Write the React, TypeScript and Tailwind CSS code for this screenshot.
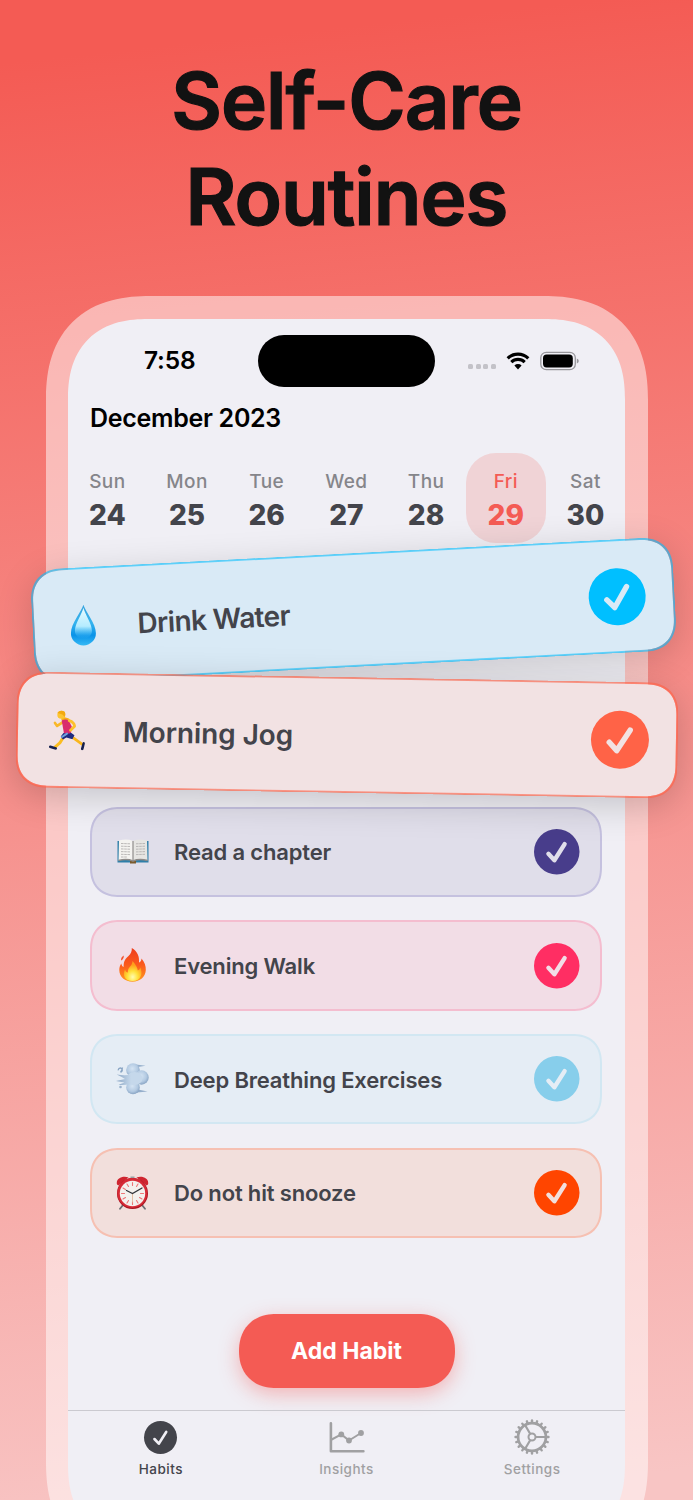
import type { ReactNode } from 'react'

const DAYS = [
  { name: 'Sun', date: 24 },
  { name: 'Mon', date: 25 },
  { name: 'Tue', date: 26 },
  { name: 'Wed', date: 27 },
  { name: 'Thu', date: 28 },
  { name: 'Fri', date: 29, active: true },
  { name: 'Sat', date: 30 },
]

function CheckCircle({ className, fill, tick, stroke = 4.6 }: { className: string; fill: string; tick: string; stroke?: number }) {
  return (
    <svg viewBox="0 0 48 48" className={`shrink-0 overflow-visible ${className}`}>
      <circle cx="24" cy="24" r="24" fill={fill} />
      <path d="M15.2 26.2 21.5 33 32.3 15.9" fill="none" stroke={tick} strokeWidth={stroke} strokeLinecap="round" strokeLinejoin="round" />
    </svg>
  )
}

function DropIcon() {
  return (
    <svg viewBox="0 0 26 42" className="h-[42px] w-[26px]">
      <defs>
        <linearGradient id="drop" x1="0" y1="0" x2="0" y2="1">
          <stop offset="0" stopColor="#3aa4dd" />
          <stop offset="0.45" stopColor="#35b3ee" />
          <stop offset="0.75" stopColor="#0a93e8" />
          <stop offset="1" stopColor="#35b9f5" />
        </linearGradient>
        <linearGradient id="dropLight" x1="0" y1="0" x2="0" y2="1">
          <stop offset="0" stopColor="#e8fbff" />
          <stop offset="0.6" stopColor="#b5ecff" />
          <stop offset="1" stopColor="#3dbcf8" stopOpacity="0" />
        </linearGradient>
      </defs>
      <path d="M13 .5C15 7.500 25.500 19 25.500 29A12.500 12.300 0 0 1 .5 29C.5 19 11 7.500 13 .5Z" fill="url(#drop)" />
      <path d="M13 3.500C14.500 10 21.500 19 21.500 26.500 21.500 31 18 34.500 13 34.500S4.500 31 4.500 26.500C4.500 19 11.500 10 13 3.500Z" fill="url(#dropLight)" />
    </svg>
  )
}

function RunnerIcon() {
  return (
    <svg viewBox="0 0 36 40" className="h-10 w-9" fill="none" strokeLinecap="round" strokeLinejoin="round">
      <path d="M22 26 30 31.500 33.500 34" stroke="#f9b61d" strokeWidth="2.800" />
      <path d="M15.500 25.500 11 33 6 37.500" stroke="#fbbd20" strokeWidth="3" />
      <path d="M14.500 11.500 8 16 5.800 13" stroke="#f9b828" strokeWidth="2.600" />
      <path d="M14 9 18.500 10" stroke="#f6ad18" strokeWidth="4" />
      <path d="M12.500 10.500Q16 8.500 19.500 10L22.500 16 22 23Q18 25.500 15 23.500Z" fill="#d92b6d" />
      <path d="M14.500 23Q19 24.500 22 22.500L25.500 25 23.500 29 17.500 27.500 14 29.500 11.800 26.500Z" fill="#1f2a80" />
      <path d="m13 27 5-3.500" stroke="#6fa0dd" strokeWidth="2" />
      <path d="M20 10.500Q25 12 25.500 16L21.500 20" stroke="#fdc02c" strokeWidth="2.800" />
      <circle cx="12" cy="4.800" r="4" fill="#fdc530" />
      <path d="M8 3Q11-.5 15 1.500 17 4 15 7 14.500 4 8 3Z" fill="#f3a90f" />
      <path d="M1.500 37 7 38.500M33.500 38.500 35 33" stroke="#15204e" strokeWidth="2.600" />
    </svg>
  )
}

function BookIcon() {
  return (
    <svg viewBox="0 0 32 25" className="h-[25px] w-8">
      <path d="M.5 2H31.500V23.500H.5Z" fill="#2f7fa8" />
      <path d="M13 22h6v2.500h-6Z" fill="#7b5b2d" />
      <path d="M2 1.500Q10-.5 16 2V22Q10 19.500 1.500 21.500Z" fill="#f4f3f0" />
      <path d="M30 1.500Q22-.5 16 2V22Q22 19.500 30.500 21.500Z" fill="#e6e5e2" />
      <path d="M1.500 21.500Q10 19.500 16 22 22 19.500 30.500 21.500" fill="none" stroke="#8d8a88" strokeWidth="1.500" />
      <path d="M16 2V22" stroke="#8f8d8c" strokeWidth="1.200" />
      <path d="M4 4.500 13 4.800M4 7.200 13 7.500M4 9.900 13 10.200M4 12.600 13 12.900M4 15.300 13 15.600M4 18 10 18M19 4.800 28 4.500M19 7.500 28 7.200M19 10.200 28 9.900M19 12.900 28 12.600M19 15.600 28 15.300" stroke="#b3b1b0" strokeWidth="0.900" strokeDasharray="2.600 .6" />
    </svg>
  )
}

function FireIcon() {
  return (
    <svg viewBox="0 0 27 34" className="h-[34px] w-[27px]">
      <defs>
        <linearGradient id="fire" x1="0" y1="0" x2="0" y2="1">
          <stop offset="0" stopColor="#ee3d1c" />
          <stop offset="0.5" stopColor="#fb5a1c" />
          <stop offset="1" stopColor="#ff9a1f" />
        </linearGradient>
        <radialGradient id="fireCore" cx="0.5" cy="0.8" r="0.6">
          <stop offset="0" stopColor="#fffbb0" />
          <stop offset="0.5" stopColor="#ffe13a" />
          <stop offset="1" stopColor="#ff9f1c" />
        </radialGradient>
      </defs>
      <path d="M12.800 0C18.500 3.500 20.500 8 20 14.500 21.500 14 22.500 12.500 22.500 10.500 25.500 14 27 18 26.800 22 26.500 29 21 33.700 13.500 33.700 6 33.700.3 29 .3 22 .3 19.500 1 17.500 2.300 15.500 2.600 17.500 3.300 18.500 4.600 19 4.500 13 6.500 10.500 9.500 8 12 5.800 13 3.200 12.800 0Z" fill="url(#fire)" />
      <path d="M13.500 13C17 17 18.500 20 18.800 22.500 20 22 21 21 21.300 19.500 24 25 22.500 33 13.500 33 5 33 3.500 26.500 6 21.500 6.500 23.500 7.500 24.300 8.800 24.500 8.500 19 13.500 18 13.500 13Z" fill="url(#fireCore)" />
      <path d="M2 12.500Q1.800 9 4.800 7.500 5 11 2 12.500Z" fill="#f25430" />
    </svg>
  )
}

function WindIcon() {
  return (
    <svg viewBox="0 0 33 32" className="h-8 w-[33px]">
      <defs>
        <radialGradient id="puff" cx="0.45" cy="0.4" r="0.65">
          <stop offset="0" stopColor="#d5e4f3" />
          <stop offset="0.6" stopColor="#b3cae2" />
          <stop offset="1" stopColor="#7f9cbd" />
        </radialGradient>
        <linearGradient id="gust" x1="0" y1="0" x2="1" y2="0">
          <stop offset="0" stopColor="#8ba6c4" />
          <stop offset="1" stopColor="#c5d8eb" />
        </linearGradient>
      </defs>
      <path d="M20 1.500 29.500 2.800 22 4ZM22 26.500 31.500 28.500 21 29.500Z" fill="#94aecb" />
      <circle cx="17" cy="7" r="6.800" fill="url(#puff)" />
      <circle cx="17" cy="24.500" r="6.800" fill="url(#puff)" />
      <circle cx="25.500" cy="14.500" r="7.200" fill="url(#puff)" />
      <ellipse cx="18.500" cy="15.500" rx="8" ry="6.500" fill="#c5d8eb" />
      <path d="M.8 11.500Q9 13 15 11.500V21Q8 22.500 2.500 21.800L8.500 19.500Q4 18.500 0 18L9 16Q5 13.500.8 11.500Z" fill="url(#gust)" />
      <path d="M2.300 7.300a2 2 0 1 1 2.200 1.700q1.500-1 2-4.500" fill="none" stroke="#88a4c3" strokeWidth="1.300" />
      <circle cx="4.500" cy="24" r="1.300" fill="#9bb3cd" />
    </svg>
  )
}

function ClockIcon() {
  return (
    <svg viewBox="0 0 33 35" className="h-[35px] w-[33px]" strokeLinecap="round">
      <path d="M7 30 4 33.800M26 30 29 33.800" stroke="#6b6f74" strokeWidth="1.800" />
      <path d="M14.500 1.500h4V5h-4Z" fill="#9a9ea2" />
      <path d="M1 9.500C-.5 4 6 .3 12.500 2.500L2.500 10.500ZM32 9.500C33.500 4 27 .3 20.500 2.500L30.500 10.500Z" fill="#cf2530" />
      <circle cx="16.500" cy="18.500" r="15.500" fill="#a81520" />
      <circle cx="16.300" cy="18" r="15" fill="#d62a36" />
      <circle cx="16.500" cy="18.500" r="12.700" fill="#f4f1ee" />
      <path d="M16.500 7.500V10.500M16.500 26.500V29.500M5.500 18.500H8.500M24.500 18.500H27.500M11 9 12.500 11.500M22 9 20.500 11.500M7 13 9.500 14.500M7 24 9.500 22.500M26 24 23.500 22.500M11 28 12.500 25.500M22 28 20.500 25.500" stroke="#ee7577" strokeWidth="1.100" />
      <path d="M16.500 18.500V27" stroke="#e3ba9c" strokeWidth="0.900" />
      <path d="M10.500 15.500 16.500 18.500 26 13" fill="none" stroke="#30343a" strokeWidth="1.300" />
    </svg>
  )
}

const HABITS = [
  { title: 'Read a chapter', icon: <BookIcon />, card: 'border-[#c5c1df] bg-[#e0deea]', color: '#483d8b', tick: '#e0deea' },
  { title: 'Evening Walk', icon: <FireIcon />, card: 'border-[#f4bdcf] bg-[#f2dde6]', color: '#ff2e63', tick: '#f2dde6' },
  { title: 'Deep Breathing Exercises', icon: <WindIcon />, card: 'border-[#d2e7f2] bg-[#e5edf5]', color: '#87ceeb', tick: '#e5edf5' },
  { title: 'Do not hit snooze', icon: <ClockIcon />, card: 'border-[#f6c0b2] bg-[#f2dfdc]', color: '#ff4500', tick: '#f2dfdc' },
]

function StatusBar() {
  return (
    <div className="flex h-[52px] items-center pl-[76px]">
      <span className="w-[114px] text-[24.500px] font-semibold tracking-[-0.2px] text-black">7:58</span>
      <div className="h-[52px] w-[177px] rounded-full bg-black" />
      <div className="ml-[33px] mt-3 flex gap-[2.500px]">
        {[0, 1, 2, 3].map(i => (
          <div key={i} className="size-[5px] rounded-[1.500px] bg-[#c3c2c8]" />
        ))}
      </div>
      <svg viewBox="0 0 24 18" className="ml-[10px] h-[18px] w-6">
        <path d="M1.700 6.300a14.700 14.700 0 0 1 20.600 0" fill="none" stroke="#000" strokeWidth="3.200" />
        <path d="M5.300 10.100a9.600 9.600 0 0 1 13.400 0" fill="none" stroke="#000" strokeWidth="3.100" />
        <path d="M8.400 13.500a5.200 5.200 0 0 1 7.200 0L12 17.600Z" fill="#000" />
      </svg>
      <svg viewBox="0 0 40 20" className="ml-[10px] h-5 w-10">
        <rect x="0.800" y="1.300" width="34.500" height="17.400" rx="5.500" fill="none" stroke="#97969b" strokeWidth="1.300" />
        <rect x="3" y="3.600" width="29.800" height="12.800" rx="3.600" fill="#000" />
        <path d="M36.800 7.500q2 .8 2 2.500t-2 2.500Z" fill="#97969b" />
      </svg>
    </div>
  )
}

function ChartIcon() {
  return (
    <svg viewBox="0 0 36 32" className="h-8 w-9" fill="none" stroke="#a0a0a2" strokeLinecap="round" strokeLinejoin="round">
      <path d="M1.900 2.300V30.300H34.400" strokeWidth="2.600" />
      <path d="M2.700 18.500 12.300 13.400 20 19.500 32 12" strokeWidth="2" />
      <g fill="#a0a0a2" stroke="none">
        <circle cx="12.300" cy="13.400" r="2.900" />
        <circle cx="20" cy="19.500" r="2.900" />
        <circle cx="32" cy="12" r="2.900" />
      </g>
    </svg>
  )
}

function GearIcon() {
  return (
    <svg viewBox="-18 -18 36 36" className="size-9" fill="none" stroke="#a0a0a2">
      <circle r="13.900" strokeWidth="2.700" />
      <circle r="3.500" strokeWidth="2" />
      <path d="M4 0H13.500M-2 -3.500-7-12M-2 3.500-7 12" strokeWidth="2.200" />
      {Array.from({ length: 20 }, (_, i) => (
        <path key={i} d="M15 0H16.500" strokeWidth="2.400" strokeLinecap="round" transform={`rotate(${i * 18})`} />
      ))}
    </svg>
  )
}

function Tab({ label, color, children }: { label: string; color: string; children: ReactNode }) {
  return (
    <div className="flex flex-1 flex-col items-center">
      <div className="flex h-9 items-center justify-center">{children}</div>
      <span className={`mt-[5px] text-[13.500px] font-medium leading-[18px] tracking-[0.5px] ${color}`}>{label}</span>
    </div>
  )
}

export default function App() {
  return (
    <div className="h-[1500px] w-[693px] overflow-hidden bg-[linear-gradient(174deg,#f45b54_4%,#f8c5c4_98%)] pt-[53px] font-['Inter','Liberation_Sans',sans-serif]">
      <h1 className="text-center text-[78px] font-semibold leading-[96px] tracking-[-1px] text-[#121212] [-webkit-text-stroke:1.2px_#121212]">
        Self-Care
        <br />
        Routines
      </h1>

      <div className="ml-[45.500px] mt-[51px] h-[1270px] w-[602px] rounded-[89px] bg-white/50 p-[22.500px] supports-[corner-shape:squircle]:rounded-[104px] supports-[corner-shape:squircle]:[corner-shape:superellipse(1.25)]">
        <div className="flex h-full flex-col rounded-[67px] bg-[#f0eff5] pt-4 supports-[corner-shape:squircle]:rounded-[80px] supports-[corner-shape:squircle]:[corner-shape:superellipse(1.25)]">
          <StatusBar />

          <h2 className="mt-[15px] pl-[22px] text-[25px] font-semibold leading-8 tracking-[-0.3px] text-black">December 2023</h2>

          {/* week strip */}
          <div className="-ml-[0.500px] mt-[19px] flex">
            {DAYS.map(d => (
              <div key={d.name} className={`flex h-[90px] w-[79.700px] shrink-0 flex-col items-center rounded-[30px] pt-4 ${d.active ? 'bg-[#f0d3d6] text-[#f45b54]' : 'text-[#43444b]'}`}>
                <span className={`text-[19px] font-medium leading-[26px] tracking-[0.4px] ${d.active ? '' : 'text-[#85858a]'}`}>{d.name}</span>
                <span className="mt-1 text-[28px] font-extrabold leading-8">{d.date}</span>
              </div>
            ))}
          </div>

          {/* raised habits */}
          <div className="-ml-[36px] mt-[10px] flex h-[114px] w-[643px] shrink-0 -rotate-3 items-center rounded-[28px] border-2 border-[#00bfff]/60 bg-[#d9eaf6] bg-clip-padding pl-[36px] pr-[27px] shadow-[0_8px_36px_rgba(0,0,0,0.16)] supports-[corner-shape:squircle]:rounded-[33px] supports-[corner-shape:squircle]:[corner-shape:superellipse(1.25)]">
            <div className="mt-0.5 rotate-3"><DropIcon /></div>
            <span className="ml-[41px] flex-1 pt-1 text-[28px] font-semibold tracking-[-0.6px] text-[#43444b]">Drink Water</span>
            <CheckCircle className="size-[57px]" fill="#00bfff" tick="#d9eaf6" />
          </div>
          <div className="-ml-[52.500px] mt-[10px] flex h-[116px] w-[662px] shrink-0 rotate-1 items-center rounded-[28px] border-2 border-[#ff6347]/65 bg-[#f2e2e3] bg-clip-padding pl-[31px] pr-[27px] shadow-[0_8px_36px_rgba(0,0,0,0.18)] supports-[corner-shape:squircle]:rounded-[33px] supports-[corner-shape:squircle]:[corner-shape:superellipse(1.25)]">
            <RunnerIcon />
            <span className="ml-[38px] flex-1 pt-0.5 text-[28px] font-semibold tracking-[-0.1px] text-[#43444b]">Morning Jog</span>
            <CheckCircle className="size-[58px]" fill="#ff6347" tick="#f2e2e3" />
          </div>

          <div className="ml-[22px] mr-[23px] mt-[14px] flex flex-col gap-[23.200px]">
            {HABITS.map(h => (
              <div key={h.title} className={`flex h-[90.500px] items-center rounded-[27px] border-2 pl-[20.500px] pr-[21px] supports-[corner-shape:squircle]:rounded-[30px] supports-[corner-shape:squircle]:[corner-shape:superellipse(1.25)] ${h.card}`}>
                <div className="flex w-10 justify-center">{h.icon}</div>
                <span className="ml-[21.500px] flex-1 pt-0.5 text-[22px] font-semibold tracking-[-0.16px] text-[#43444b]">{h.title}</span>
                <CheckCircle className="size-[45.500px]" fill={h.color} tick={h.tick} />
              </div>
            ))}
          </div>

          <button className="mx-auto mt-[75.500px] h-[74px] w-[216px] rounded-full bg-[#f45b54] pt-0.5 text-[23px] font-bold text-white shadow-[0_6px_20px_rgba(244,91,84,0.4)] supports-[corner-shape:squircle]:[corner-shape:superellipse(1.15)]">
            Add Habit
          </button>

          {/* tab bar */}
          <div className="mt-[22.500px] flex border-t border-[#cbcad0] pt-2">
            <Tab label="Habits" color="text-[#43444b]">
              <CheckCircle className="size-[33px]" fill="#43444b" tick="#f0eff5" stroke={3.8} />
            </Tab>
            <Tab label="Insights" color="text-[#a0a0a2]">
              <ChartIcon />
            </Tab>
            <Tab label="Settings" color="text-[#a0a0a2]">
              <GearIcon />
            </Tab>
          </div>
        </div>
      </div>
    </div>
  )
}
